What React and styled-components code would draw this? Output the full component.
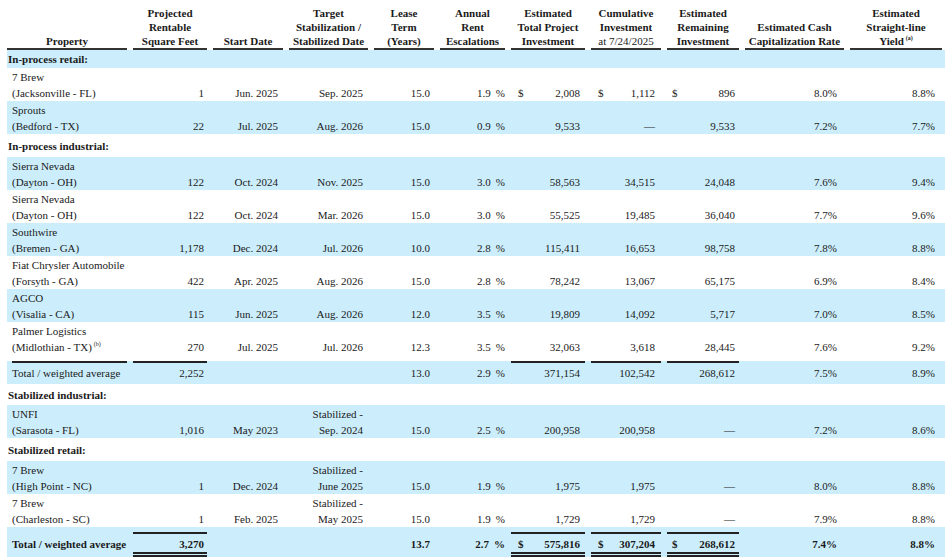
import React from "react";
import styled, { createGlobalStyle } from "styled-components";

const GlobalStyle = createGlobalStyle`
  body {
    margin: 0;
    background: #fff;
    font-family: "Liberation Serif", "Times New Roman", serif;
    color: #111;
  }
`;

const Page = styled.div`
  padding: 6px 0 0 7px;
`;

const Table = styled.table`
  width: 938px;
  table-layout: fixed;
  border-collapse: collapse;
  font-family: "Liberation Serif", "Times New Roman", serif;
  font-size: 11px;
  color: #1a1a1a;
`;

const Th = styled.th`
  padding: 0;
  vertical-align: bottom;
  font-weight: bold;
`;

const HeadBox = styled.div`
  margin: 0 ${(p) => p.$mr}px 0 ${(p) => p.$ml}px;
  border-bottom: 2px solid #333;
  line-height: 14px;
  text-align: center;
`;

const Light = styled.span`
  font-weight: normal;
`;

const Sup = styled.sup`
  font-size: 6px;
  line-height: 0;
  vertical-align: 5px;
  margin-left: 2px;
`;

const Row = styled.tr`
  background: ${(p) => (p.$shaded ? "#cceefc" : "#fff")};
  font-weight: ${(p) => (p.$bold ? "bold" : "normal")};
`;

const Td = styled.td`
  padding: 0;
  vertical-align: bottom;
`;

const Box = styled.div`
  margin: ${(p) => p.$mt || 0}px ${(p) => p.$mr}px 0 ${(p) => p.$ml}px;
  padding: ${(p) => p.$pt}px ${(p) => p.$pr}px ${(p) => p.$pb}px
    ${(p) => p.$pl}px;
  line-height: 16px;
  text-align: ${(p) => p.$align};
  white-space: nowrap;
  border-top: ${(p) =>
    p.$ruleTop ? "2px solid #222" : p.$total ? "2px solid transparent" : "0"};
  border-bottom: ${(p) =>
    p.$double ? "5px double #222" : p.$final ? "5px double transparent" : "0"};
`;

const Money = styled.div`
  display: flex;
  justify-content: ${(p) => (p.$dollar ? "space-between" : "flex-end")};
`;

const Pct = styled.span`
  margin-left: 5px;
`;

const SectionLabel = styled.div`
  padding: ${(p) => p.$pt}px 0 ${(p) => p.$pb}px 1px;
  line-height: 16px;
  font-weight: bold;
`;

const cols = [
  { w: 123, ml: 0, mr: 3, pl: 5, pr: 0, align: "left" },
  { w: 80, ml: 3, mr: 3, pl: 0, pr: 3, align: "right" },
  { w: 76, ml: 3, mr: 3, pl: 0, pr: 5, align: "right" },
  { w: 85, ml: 3, mr: 3, pl: 0, pr: 5, align: "right" },
  { w: 66, ml: 3, mr: 3, pl: 0, pr: 4, align: "right" },
  { w: 71, ml: 3, mr: 3, pl: 0, pr: 0, align: "right" },
  { w: 80, ml: 3, mr: 3, pl: 7, pr: 5, align: "right" },
  { w: 76, ml: 3, mr: 3, pl: 7, pr: 6, align: "right" },
  { w: 78, ml: 3, mr: 3, pl: 5, pr: 4, align: "right" },
  { w: 105, ml: 3, mr: 3, pl: 0, pr: 7, align: "right" },
  { w: 98, ml: 3, mr: 3, pl: 0, pr: 7, align: "right" },
];

const headers = [
  <>Property</>,
  <>Projected<br />Rentable<br />Square Feet</>,
  <>Start Date</>,
  <>Target<br />Stabilization /<br />Stabilized Date</>,
  <>Lease<br />Term<br />(Years)</>,
  <>Annual<br />Rent<br />Escalations</>,
  <>Estimated<br />Total Project<br />Investment</>,
  <>Cumulative<br />Investment<br /><Light>at 7/24/2025</Light></>,
  <>Estimated<br />Remaining<br />Investment</>,
  <>Estimated Cash<br />Capitalization Rate</>,
  <>Estimated<br />Straight-line<br />Yield<Sup>(a)</Sup></>,
];

const D = "\u2014";

const rows = [
  { kind: "section", label: "In-process retail:", pt: 1, pb: 1 },
  { name: "7 Brew", loc: "(Jacksonville - FL)", sf: "1", start: "Jun. 2025", target: ["Sep. 2025"], term: "15.0", esc: "1.9", inv: ["2,008", "1,112", "896"], dollar: true, cap: "8.0%", yld: "8.8%" },
  { name: "Sprouts", loc: "(Bedford - TX)", sf: "22", start: "Jul. 2025", target: ["Aug. 2026"], term: "15.0", esc: "0.9", inv: ["9,533", D, "9,533"], cap: "7.2%", yld: "7.7%" },
  { kind: "section", label: "In-process industrial:", pt: 4, pb: 3 },
  { name: "Sierra Nevada", loc: "(Dayton - OH)", sf: "122", start: "Oct. 2024", target: ["Nov. 2025"], term: "15.0", esc: "3.0", inv: ["58,563", "34,515", "24,048"], cap: "7.6%", yld: "9.4%" },
  { name: "Sierra Nevada", loc: "(Dayton - OH)", sf: "122", start: "Oct. 2024", target: ["Mar. 2026"], term: "15.0", esc: "3.0", inv: ["55,525", "19,485", "36,040"], cap: "7.7%", yld: "9.6%" },
  { name: "Southwire", loc: "(Bremen - GA)", sf: "1,178", start: "Dec. 2024", target: ["Jul. 2026"], term: "10.0", esc: "2.8", inv: ["115,411", "16,653", "98,758"], cap: "7.8%", yld: "8.8%" },
  { name: "Fiat Chrysler Automobile", loc: "(Forsyth - GA)", sf: "422", start: "Apr. 2025", target: ["Aug. 2026"], term: "15.0", esc: "2.8", inv: ["78,242", "13,067", "65,175"], cap: "6.9%", yld: "8.4%" },
  { name: "AGCO", loc: "(Visalia - CA)", sf: "115", start: "Jun. 2025", target: ["Aug. 2026"], term: "12.0", esc: "3.5", inv: ["19,809", "14,092", "5,717"], cap: "7.0%", yld: "8.5%" },
  { name: "Palmer Logistics", loc: "(Midlothian - TX)", note: "(b)", sf: "270", start: "Jul. 2025", target: ["Jul. 2026"], term: "12.3", esc: "3.5", inv: ["32,063", "3,618", "28,445"], cap: "7.6%", yld: "9.2%", pb: 6 },
  { kind: "total", name: "Total / weighted average", sf: "2,252", term: "13.0", esc: "2.9", inv: ["371,154", "102,542", "268,612"], cap: "7.5%", yld: "8.9%", rules: [0, 1, 6, 7, 8] },
  { kind: "section", label: "Stabilized industrial:", pt: 3, pb: 2 },
  { name: "UNFI", loc: "(Sarasota - FL)", sf: "1,016", start: "May 2023", target: ["Stabilized -", "Sep. 2024"], term: "15.0", esc: "2.5", inv: ["200,958", "200,958", D], cap: "7.2%", yld: "8.6%" },
  { kind: "section", label: "Stabilized retail:", pt: 4, pb: 3 },
  { name: "7 Brew", loc: "(High Point - NC)", sf: "1", start: "Dec. 2024", target: ["Stabilized -", "June 2025"], term: "15.0", esc: "1.9", inv: ["1,975", "1,975", D], cap: "8.0%", yld: "8.8%" },
  { name: "7 Brew", loc: "(Charleston - SC)", sf: "1", start: "Feb. 2025", target: ["Stabilized -", "May 2025"], term: "15.0", esc: "1.9", inv: ["1,729", "1,729", D], cap: "7.9%", yld: "8.8%" },
  { kind: "final", name: "Total / weighted average", sf: "3,270", term: "13.7", esc: "2.7", inv: ["575,816", "307,204", "268,612"], dollar: true, cap: "7.4%", yld: "8.8%", rules: [1, 6, 7, 8] },
];

const cellsFor = (r) => {
  const isTotal = r.kind === "total" || r.kind === "final";
  const name = isTotal ? (
    r.name
  ) : (
    <>
      {r.name}
      <br />
      {r.loc}
      {r.note && <Sup>{r.note}</Sup>}
    </>
  );
  const target = r.target
    ? r.target.map((t, i) => (
        <React.Fragment key={i}>
          {i > 0 && <br />}
          {t}
        </React.Fragment>
      ))
    : "";
  return [
    name,
    r.sf,
    r.start || "",
    target,
    r.term,
    <>
      {r.esc}
      <Pct>%</Pct>
    </>,
    ...r.inv.map((v, i) => (
      <Money key={i} $dollar={r.dollar}>
        {r.dollar && <span>$</span>}
        <span>{v}</span>
      </Money>
    )),
    r.cap,
    r.yld,
  ];
};

const DataRow = ({ row, shaded }) => {
  const isTotal = row.kind === "total";
  const isFinal = row.kind === "final";
  const rules = row.rules || [];
  const cells = cellsFor(row);
  return (
    <Row $shaded={shaded} $bold={isFinal}>
      {cells.map((c, i) => {
        const col = cols[i];
        const ruled = rules.includes(i);
        const ml = isTotal && i === 0 ? 5 : col.ml;
        return (
          <Td key={i}>
            <Box
              $ml={ml}
              $mr={col.mr}
              $mt={isFinal ? 5 : 0}
              $pl={isTotal && i === 0 ? 0 : col.pl}
              $pr={col.pr}
              $pt={isTotal || isFinal ? 2 : 1}
              $pb={isTotal ? 3 : isFinal ? 0 : row.pb || 0}
              $align={col.align}
              $total={isTotal || isFinal}
              $final={isFinal}
              $ruleTop={ruled}
              $double={isFinal && ruled}
            >
              {c}
            </Box>
          </Td>
        );
      })}
    </Row>
  );
};

export default function App() {
  return (
    <Page>
      <GlobalStyle />
      <Table>
        <colgroup>
          {cols.map((c, i) => (
            <col key={i} style={{ width: c.w }} />
          ))}
        </colgroup>
        <thead>
          <tr>
            {headers.map((h, i) => (
              <Th key={i}>
                <HeadBox $ml={cols[i].ml} $mr={cols[i].mr}>
                  {h}
                </HeadBox>
              </Th>
            ))}
          </tr>
        </thead>
        <tbody>
          {rows.map((r, i) =>
            r.kind === "section" ? (
              <Row key={i} $shaded={i % 2 === 0}>
                <Td colSpan={11}>
                  <SectionLabel $pt={r.pt} $pb={r.pb}>
                    {r.label}
                  </SectionLabel>
                </Td>
              </Row>
            ) : (
              <DataRow key={i} row={r} shaded={i % 2 === 0} />
            )
          )}
        </tbody>
      </Table>
    </Page>
  );
}
